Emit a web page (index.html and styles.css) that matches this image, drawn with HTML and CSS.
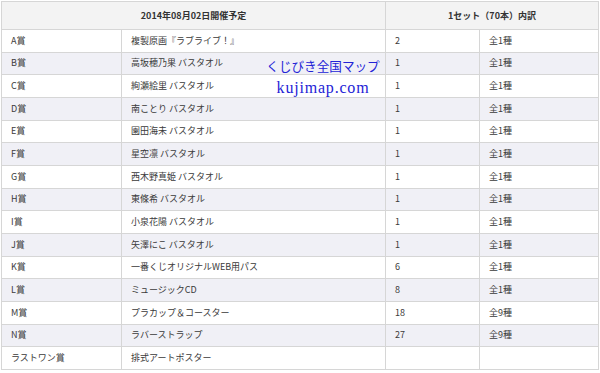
FILE: index.html
```html
<!DOCTYPE html>
<html lang="ja">
<head>
<meta charset="utf-8">
<title>2014年08月02日開催予定</title>
<link rel="stylesheet" href="styles.css">
</head>
<body>
<div class="wrap">
  <table class="prizes">
    <colgroup>
      <col class="c-prize">
      <col class="c-name">
      <col class="c-count">
      <col class="c-kinds">
    </colgroup>
    <thead>
      <tr>
        <th colspan="2">2014年08月02日開催予定</th>
        <th colspan="2">1セット（70本）内訳</th>
      </tr>
    </thead>
    <tbody>
      <tr><td>A賞</td><td>複製原画『ラブライブ！』</td><td>2</td><td>全1種</td></tr>
      <tr><td>B賞</td><td>高坂穂乃果 バスタオル</td><td>1</td><td>全1種</td></tr>
      <tr><td>C賞</td><td>絢瀬絵里 バスタオル</td><td>1</td><td>全1種</td></tr>
      <tr><td>D賞</td><td>南ことり バスタオル</td><td>1</td><td>全1種</td></tr>
      <tr><td>E賞</td><td>園田海未 バスタオル</td><td>1</td><td>全1種</td></tr>
      <tr><td>F賞</td><td>星空凛 バスタオル</td><td>1</td><td>全1種</td></tr>
      <tr><td>G賞</td><td>西木野真姫 バスタオル</td><td>1</td><td>全1種</td></tr>
      <tr><td>H賞</td><td>東條希 バスタオル</td><td>1</td><td>全1種</td></tr>
      <tr><td>I賞</td><td>小泉花陽 バスタオル</td><td>1</td><td>全1種</td></tr>
      <tr><td>J賞</td><td>矢澤にこ バスタオル</td><td>1</td><td>全1種</td></tr>
      <tr><td>K賞</td><td>一番くじオリジナルWEB用パス</td><td>6</td><td>全1種</td></tr>
      <tr><td>L賞</td><td>ミュージックCD</td><td>8</td><td>全1種</td></tr>
      <tr><td>M賞</td><td>プラカップ＆コースター</td><td>18</td><td>全9種</td></tr>
      <tr><td>N賞</td><td>ラバーストラップ</td><td>27</td><td>全9種</td></tr>
      <tr><td>ラストワン賞</td><td>排式アートポスター</td><td></td><td></td></tr>
    </tbody>
  </table>
  <div class="watermark">
    <div class="wm-jp">くじびき全国マップ</div>
    <div class="wm-en">kujimap.com</div>
  </div>
</div>
</body>
</html>
```
FILE: styles.css
```css
html, body {
  margin: 0;
  padding: 0;
  background: #ffffff;
}
.wrap {
  position: relative;
  padding: 1px 0 0 1px;
}
.prizes {
  border-collapse: collapse;
  table-layout: fixed;
  width: 597px;
  font-family: "Noto Sans CJK JP", "Liberation Sans", sans-serif;
  font-size: 9px;
  color: #3a3a3a;
  border: 1px solid #d6d6d6;
}
.c-prize { width: 120px; }
.c-name { width: 264px; }
.c-count { width: 94px; }
.c-kinds { width: 119px; }
.prizes th,
.prizes td {
  border: 1px solid #d6d6d6;
  padding: 0 9px;
  text-align: left;
  white-space: nowrap;
  overflow: hidden;
  line-height: 12px;
}
.prizes th {
  background: #f3f3f3;
  text-align: center;
  font-weight: bold;
  color: #333333;
}
.prizes thead tr { height: 28px; }
.prizes tbody tr { height: 22.67px; }
.prizes tbody tr:nth-child(even) td { background: #f0f0f6; }
.watermark {
  position: absolute;
  left: 265px;
  top: 59px;
  color: #2323d6;
  font-family: "Liberation Serif", "Noto Sans CJK JP", serif;
  text-align: center;
  width: 116px;
}
.wm-jp {
  font-size: 12.6px;
  line-height: 16px;
  letter-spacing: 0;
}
.wm-en {
  margin-top: 4px;
  font-size: 16px;
  line-height: 18px;
  letter-spacing: 0.8px;
}
```
